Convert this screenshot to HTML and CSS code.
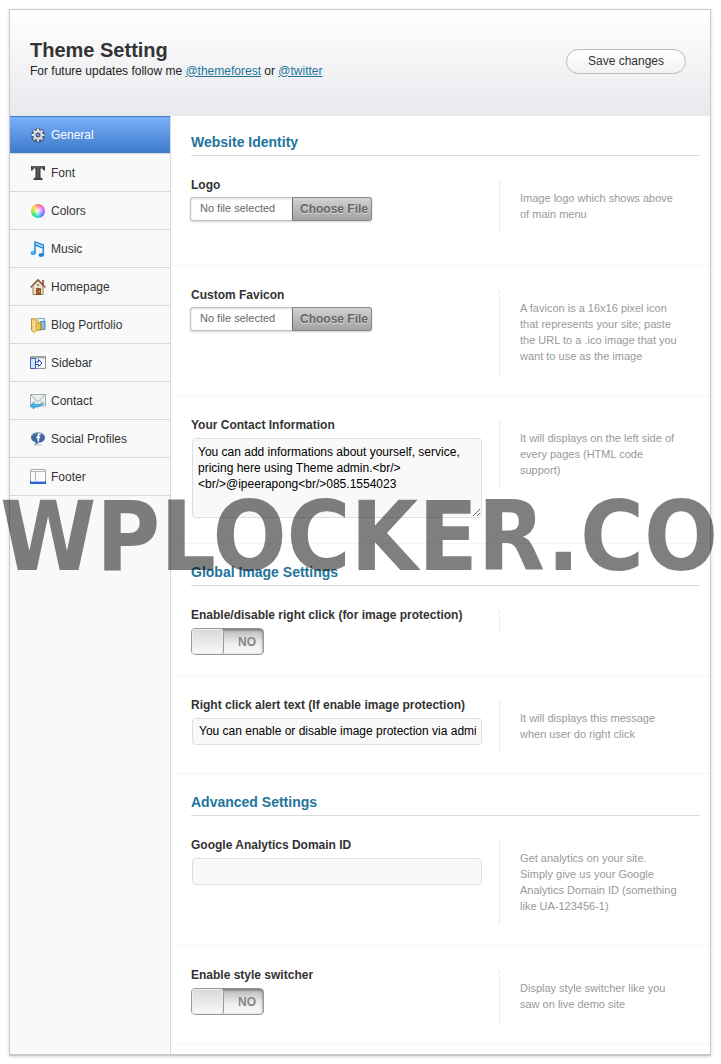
FILE: index.html
```
<!DOCTYPE html>
<html lang="en">
<head>
<meta charset="utf-8">
<title>Theme Setting</title>
<link rel="stylesheet" href="styles.css">
</head>
<body>
<form class="panel">
  <header class="panel-header">
    <div class="heading">
      <h1 class="title">Theme Setting</h1>
      <p class="subtitle">For future updates follow me <a href="#">@themeforest</a> or <a href="#">@twitter</a></p>
    </div>
    <button class="save" type="button">Save changes</button>
  </header>
  <div class="columns">
    <nav class="menu">
      <a class="menu-item active" href="#general">
        <svg class="icon" viewBox="0 0 16 16"><circle cx="8" cy="9" r="5.5" fill="none" stroke="#2c5793" stroke-width="3" opacity=".5"/><path d="M8 1v14M1 8h14M3 3l10 10M13 3L3 13" stroke="#4b5565" stroke-width="3.600"/><path d="M8 1.600v12.800M1.600 8h12.800M3.500 3.500l9 9M12.500 3.500l-9 9" stroke="#e4e6e8" stroke-width="2"/><circle cx="8" cy="8" r="3.600" fill="#5f7ba6" stroke="#dcdee0" stroke-width="2.200"/><circle cx="8" cy="8" r="1.800" fill="#6da3ec" stroke="#4b5565"/></svg>General</a>
      <a class="menu-item" href="#font">
        <svg class="icon" viewBox="0 0 16 16"><path d="M1 1h14v4.500h-1.500L12.500 3.500H10.500v9l2 .8V15h-9v-1.700l2-.8v-9H3.500L2.500 5.500H1z" fill="#3f3f45"/><path d="M2 2h12M8 3v10" stroke="#77777c" fill="none"/></svg>Font</a>
      <a class="menu-item" href="#colors"><span class="icon ball"></span>Colors</a>
      <a class="menu-item" href="#music">
        <svg class="icon" viewBox="0 0 16 16"><path d="M5 12.500V1l8.300 3v10.500M5 4l8.300 3" fill="none" stroke="#2a8ede" stroke-width="1.600"/><path d="M5.500 2.600l7.500 2.700" stroke="#9bd6fc"/><ellipse cx="3.200" cy="12" rx="2.700" ry="2" fill="#2c9cf0"/><ellipse cx="11.200" cy="14" rx="2.700" ry="2" fill="#2383da"/><path d="M2 11.500h2" stroke="#85cbff"/></svg>Music</a>
      <a class="menu-item" href="#homepage">
        <svg class="icon" viewBox="0 0 16 16"><path d="M12 1h2v5h-2z" fill="#ad6b45"/><path d="M3 7l5-5 5 5v8.500H3z" fill="#f3dfc8" stroke="#9a7a61"/><path d="M.7 8.500L8 1l7.300 7.500" fill="none" stroke="#74513f" stroke-width="1.700"/><path d="M1.500 8.600L8 2l6.500 6.600" fill="none" stroke="#dcb49a" stroke-width=".7"/><path d="M6.500 9.500h4V16h-4z" fill="#a85c24" stroke="#6f3b18" stroke-width=".7"/><path d="M7 5h2v2H7z" fill="#7d8ca0"/><circle cx="9.300" cy="12.500" r=".6" fill="#f4c26a"/></svg>Homepage</a>
      <a class="menu-item" href="#portfolio">
        <svg class="icon" viewBox="0 0 16 16"><path d="M8 1.500h6.500v11H8z" fill="#e8f3fa" stroke="#7fa5bd"/><path d="M10.500 4.500h4.500v8h-4.500z" fill="#86bde0" stroke="#5d8baa"/><path d="M7 6h4v7H7z" fill="#eec72d" stroke="#9f8114"/><path d="M1.500 1.500l3 .7V15.500l-3-2z" fill="#f5d386" stroke="#c49337"/><path d="M2.500 1H7v3h1v10l-3.500 1.500V3z" fill="#e8b958"/><path d="M4.500 3.500V15" stroke="#fae4a9"/></svg>Blog Portfolio</a>
      <a class="menu-item" href="#sidebar">
        <svg class="icon" viewBox="0 0 16 16"><path d="M.5 1.500h15v12H.5z" fill="#f7f8fa" stroke="#949494"/><path d="M1 1.500h14v2H1z" fill="#aaa"/><path d="M.5 3.500h5v10h-5z" fill="#d4e2fb" stroke="#3b63bd"/><path d="M5.500 7h3V4.500L12 8l-3.500 3.500V9.500h-3z" fill="#fff" stroke="#2544bb"/></svg>Sidebar</a>
      <a class="menu-item" href="#contact">
        <svg class="icon" viewBox="0 0 16 16"><path d="M.5 1.500h15v11.500H.5z" fill="#e9f0ef" stroke="#9eafae"/><path d="M1 2l7 6.500L15 2M1 12.500l5-5M15 12.500l-5-5" fill="none" stroke="#a6b5b4"/><path d="M0 13l4-3.500v2c4 0 7-.2 9.500-1.500-2 3.300-5.500 4.500-9.500 4.300V16z" fill="#45b2ed" stroke="#2788bd" stroke-width=".6"/></svg>Contact</a>
      <a class="menu-item" href="#social">
        <svg class="icon" viewBox="0 0 16 16"><ellipse cx="8" cy="14" rx="5" ry=".7" fill="#ccc"/><path d="M8 1.500c4.300 0 7 2.100 7 5s-2.500 5-6 5l-4 2.500.6-3C2.800 10.500 1 8.800 1 6.500c0-2.900 2.700-5 7-5z" fill="#42659f"/><path d="M2.500 5C5 1.500 11 1.500 13.500 5" fill="none" stroke="#7492c2"/><path d="M10.500 3.200H9.700Q8.300 3.200 8.300 4.700v5.800M6.500 6.300h3.700" fill="none" stroke="#fff" stroke-width="1.700"/></svg>Social Profiles</a>
      <a class="menu-item" href="#footer">
        <svg class="icon" viewBox="0 0 16 16"><path d="M.5.500h15v14H.5z" fill="#fafafa" stroke="#aaa"/><path d="M1 2.500h14M5.500 2.500V12" stroke="#b5b5b5"/><path d="M0 12h16v3H0z" fill="#2c5fd8"/><path d="M1 12.500h14" stroke="#a9c5ff"/></svg>Footer</a>
    </nav>
    <main class="content">
      <h2 class="section-title">Website Identity</h2>
      <section class="row">
        <div class="field upload-field">
          <label class="label" for="logo">Logo</label>
          <div class="upload"><span class="upload-name">No file selected</span><span class="upload-action">Choose File</span><input class="upload-input" id="logo" type="file"></div>
        </div>
        <p class="hint">Image logo which shows above of main menu</p>
      </section>
      <section class="row">
        <div class="field upload-field">
          <label class="label" for="favicon">Custom Favicon</label>
          <div class="upload"><span class="upload-name">No file selected</span><span class="upload-action">Choose File</span><input class="upload-input" id="favicon" type="file"></div>
        </div>
        <p class="hint">A favicon is a 16x16 pixel icon that represents your site; paste the URL to a .ico image that you want to use as the image</p>
      </section>
      <section class="row">
        <div class="field">
          <label class="label" for="info">Your Contact Information</label>
          <textarea class="box area" id="info">You can add informations about yourself, service, pricing here using Theme admin.&lt;br/&gt;
&lt;br/&gt;@ipeerapong&lt;br/&gt;085.1554023</textarea>
        </div>
        <p class="hint">It will displays on the left side of every pages (HTML code support)</p>
      </section>
      <h2 class="section-title">Global Image Settings</h2>
      <section class="row">
        <div class="field">
          <label class="label" for="protect">Enable/disable right click (for image protection)</label>
          <div class="switch"><input class="switch-input" id="protect" type="checkbox"><span class="switch-text">NO</span></div>
        </div>
        <p class="hint"></p>
      </section>
      <section class="row">
        <div class="field">
          <label class="label" for="alert">Right click alert text (If enable image protection)</label>
          <input class="box" id="alert" type="text" value="You can enable or disable image protection via admin panel">
        </div>
        <p class="hint">It will displays this message when user do right click</p>
      </section>
      <h2 class="section-title">Advanced Settings</h2>
      <section class="row">
        <div class="field">
          <label class="label" for="analytics">Google Analytics Domain ID</label>
          <input class="box" id="analytics" type="text">
        </div>
        <p class="hint">Get analytics on your site. Simply give us your Google Analytics Domain ID (something like UA-123456-1)</p>
      </section>
      <section class="row">
        <div class="field">
          <label class="label" for="switcher">Enable style switcher</label>
          <div class="switch"><input class="switch-input" id="switcher" type="checkbox"><span class="switch-text">NO</span></div>
        </div>
        <p class="hint">Display style switcher like you saw on live demo site</p>
      </section>
    </main>
  </div>
</form>
<div class="watermark">WPLOCKER.CO</div>
</body>
</html>
```

FILE: styles.css
```
* {
  box-sizing: border-box;
}

body {
  position: relative;
  margin: 0;
  padding: 9px 10px 8px 9px;
  background: #fff;
  color: #333;
  font: 12px/16px "Liberation Sans", Arial, sans-serif;
  overflow-x: hidden;
}

h1, h2, p {
  margin: 0;
}

.panel {
  border: 1px solid #c9c9c9;
  border-bottom-width: 2px;
  box-shadow: 0 1px 3px rgba(0, 0, 0, .15);
}

.panel-header {
  display: flex;
  justify-content: space-between;
  align-items: center;
  height: 106px;
  padding: 0 24px 4px 20px;
  background: linear-gradient(#fff, #f5f5f7 45%, #e8e9ed);
}

.heading {
  padding-bottom: 6px;
}

.title {
  margin-bottom: 1px;
  font-size: 20px;
  line-height: 24px;
}

.subtitle {
  color: #222;
}

.subtitle a {
  color: #21759b;
}

.save {
  width: 120px;
  height: 25px;
  padding: 0;
  border: 1px solid #bbb;
  border-radius: 13px;
  background: linear-gradient(#fff, #f2f2f2);
  color: #333;
  font: 12px/16px "Liberation Sans", Arial, sans-serif;
}

.columns {
  display: flex;
}

.menu {
  width: 161px;
  flex: none;
  border-right: 1px solid #d9d9d9;
  background: #f9f9f9;
}

.menu-item {
  display: flex;
  align-items: center;
  gap: 5px;
  height: 38px;
  padding-left: 20px;
  border-bottom: 1px solid #d9d9d9;
  color: #333;
  text-decoration: none;
}

.menu-item.active {
  background: linear-gradient(#7db0fb, #3c7bcb);
  box-shadow: inset 0 1px #397bc9;
  color: #fff;
}

.icon {
  width: 16px;
  height: 16px;
}

.ball {
  border: 1px solid transparent;
  border-radius: 50%;
  background: radial-gradient(#fff, rgba(255, 255, 255, .6) 25%, transparent 65%) padding-box, conic-gradient(#ff6a70, #ff5ad0, #b45aff, #3f6cff, #20d8e0, #18e070, #9be820, #ffd030, #ff6a70) padding-box;
}

.content {
  flex: 1;
  min-width: 0;
  padding-bottom: 10px;
}

.section-title {
  margin: 0 10px 0 20px;
  padding: 18px 0 3px;
  border-bottom: 1px solid #dadada;
  color: #21759b;
  font-size: 14px;
  line-height: 20px;
}

.section-title:first-child {
  padding-top: 16px;
}

.row {
  display: flex;
  align-items: flex-start;
  padding: 20px 0 20px 20px;
  border-bottom: 1px solid #f5f5f5;
}

.field {
  display: flex;
  flex: 1;
  flex-direction: column;
  align-items: flex-start;
  gap: 4px;
  min-width: 0;
}

.label {
  font-weight: bold;
  line-height: 18px;
}

.upload-field {
  gap: 3px;
  min-height: 69px;
}

.hint {
  width: 211px;
  min-height: 20px;
  flex: none;
  margin-top: 5px;
  padding: 9px 30px 11px 20px;
  border-left: 1px dotted #ddd;
  color: #999;
  font-size: 11px;
}

.box {
  width: calc(100% - 18px);
  height: 27px;
  margin: 0 0 0 1px;
  padding: 4px 5px 6px 6px;
  border: 1px solid #dfdfdf;
  border-radius: 4px;
  background: #f9f9f9;
  color: #000;
  font: 12px/16px "Liberation Sans", Arial, sans-serif;
}

.area {
  height: 80px;
  margin-bottom: 5px;
  padding: 5px;
}

.upload {
  position: relative;
  display: flex;
  width: 182px;
  height: 24px;
  margin-left: -1px;
  border-radius: 3px;
  box-shadow: 0 1px 2px rgba(0, 0, 0, .2);
  line-height: 22px;
}

.upload-name {
  flex: 1;
  padding-left: 9px;
  border: 1px solid #c4c4c4;
  border-right: 0;
  border-radius: 3px 0 0 3px;
  box-shadow: inset 0 1px 2px rgba(0, 0, 0, .15);
  color: #666;
  font-size: 11px;
  line-height: 21px;
}

.upload-action {
  width: 80px;
  padding-left: 4px;
  border: 1px solid #888;
  border-left-color: #55738d;
  border-radius: 0 3px 3px 0;
  background: linear-gradient(#d2d2d2, #a2a2a2);
  color: #666;
  font-weight: bold;
  text-align: center;
  text-shadow: 0 1px #ddd;
}

.upload-input {
  position: absolute;
  inset: 0;
  width: 100%;
  opacity: 0;
}

.switch {
  position: relative;
  width: 73px;
  height: 27px;
}

.switch-input {
  display: block;
  width: 100%;
  height: 100%;
  margin: 0;
  appearance: none;
  border: 1px solid #999;
  border-radius: 4px;
  background: linear-gradient(#bbb, #eee 60%, #fafafa);
  box-shadow: inset 0 1px 3px rgba(0, 0, 0, .5);
}

.switch-input::before {
  content: "";
  display: block;
  width: 31px;
  height: 25px;
  border-right: 1px solid #999;
  border-radius: 3px;
  background: linear-gradient(#d8d8d8, #fafafa);
  box-shadow: inset 0 0 0 1px #eee;
}

.switch-text {
  position: absolute;
  top: 6px;
  right: 8px;
  color: #888;
  font-weight: bold;
  pointer-events: none;
}

.watermark {
  position: absolute;
  top: 488px;
  left: 0;
  color: rgba(0, 0, 0, .5);
  font: bold 97px/98px "DejaVu Sans Condensed", "Open Sans", sans-serif;
  white-space: nowrap;
  pointer-events: none;
}
```
